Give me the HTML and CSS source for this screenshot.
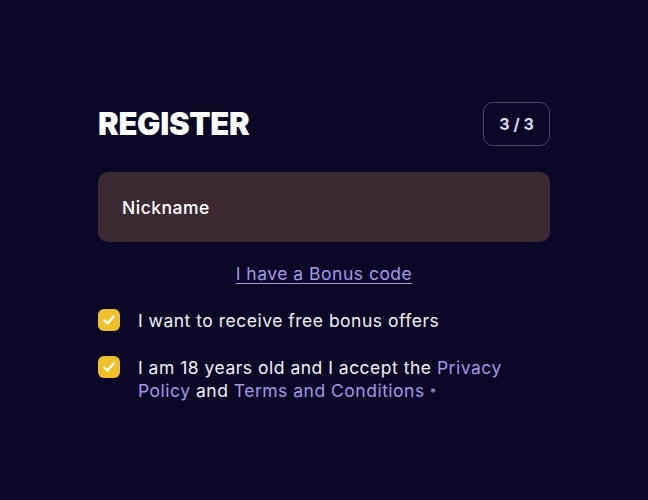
FILE: index.html
```html
<!DOCTYPE html>
<html lang="en">
<head>
<meta charset="utf-8">
<title>Register</title>
<link rel="stylesheet" href="styles.css">
</head>
<body>
<main class="card">
  <header class="head">
    <h1 class="title">REGISTER</h1>
    <div class="step">3 / 3</div>
  </header>
  <div class="field">Nickname</div>
  <a class="bonus" href="#">I have a Bonus code</a>
  <label class="check">
    <span class="box"><svg viewBox="0 0 22 22" width="22" height="22"><path d="M6.5 11.5l3 3 6-7" fill="none" stroke="#fff" stroke-width="2.4" stroke-linecap="round" stroke-linejoin="round"/></svg></span>
    <span class="label">I want to receive free bonus offers</span>
  </label>
  <label class="check">
    <span class="box"><svg viewBox="0 0 22 22" width="22" height="22"><path d="M6.5 11.5l3 3 6-7" fill="none" stroke="#fff" stroke-width="2.4" stroke-linecap="round" stroke-linejoin="round"/></svg></span>
    <span class="label">I am 18 years old and I accept the <a href="#">Privacy Policy</a> and <a href="#">Terms and Conditions</a> <span class="req">*</span></span>
  </label>
</main>
</body>
</html>
```

FILE: styles.css
```css
html, body {
  margin: 0;
  background: #0b0726;
}
body {
  font-family: "Inter", "Noto Sans", sans-serif;
  color: #f1f0f5;
}
.card {
  width: 452px;
  margin: 0 auto;
  padding-top: 102px;
  display: flex;
  flex-direction: column;
}
.head {
  display: flex;
  justify-content: space-between;
  align-items: center;
  height: 44px;
}
.title {
  margin: 0;
  font-size: 31px;
  font-weight: 900;
  letter-spacing: -0.3px;
  color: #ffffff;
  line-height: 44px;
}
.step {
  box-sizing: border-box;
  width: 67px;
  height: 44px;
  border: 1px solid #4a4570;
  border-radius: 10px;
  display: flex;
  align-items: center;
  justify-content: center;
  font-size: 16px;
  font-weight: 700;
  color: #dcdbe6;
}
.field {
  margin-top: 26px;
  height: 70px;
  border-radius: 10px;
  background: #3c2a33;
  padding-left: 24px;
  display: flex;
  align-items: center;
  font-size: 17.5px;
  letter-spacing: 0.5px;
  font-weight: 500;
  color: #ffffff;
}
.bonus {
  margin-top: 20px;
  align-self: center;
  line-height: 24px;
  font-size: 17.5px;
  letter-spacing: 0.5px;
  color: #a597e8;
  text-decoration: underline;
  text-underline-offset: 3px;
}
.check {
  display: flex;
  align-items: flex-start;
  gap: 18px;
  font-size: 17.5px;
  letter-spacing: 0.5px;
  line-height: 23px;
}
.check:first-of-type {
  margin-top: 23px;
}
.check + .check {
  margin-top: 24px;
}
.box {
  flex: none;
  width: 22px;
  height: 22px;
  border-radius: 6px;
  background: #f0bf29;
  display: flex;
}
.label {
  width: 385px;
}
.label a {
  color: #a597e8;
  text-decoration: none;
}
.req {
  color: #a597e8;
  font-size: 12px;
}
```
